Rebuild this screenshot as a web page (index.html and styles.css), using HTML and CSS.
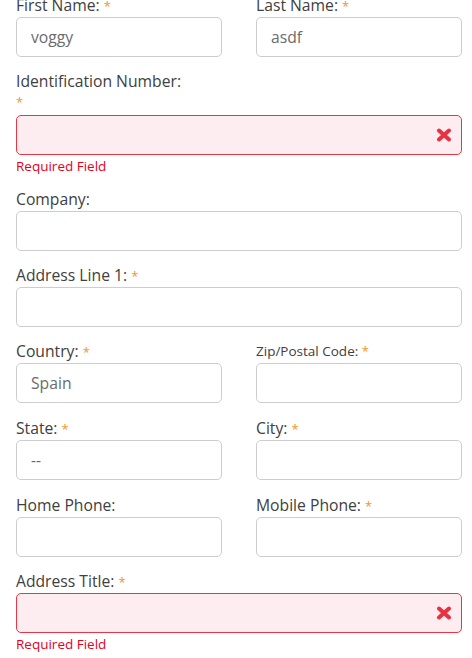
FILE: index.html
```html
<!DOCTYPE html>
<html>
<head>
<meta charset="utf-8">
<link rel="stylesheet" href="styles.css">
</head>
<body>
<form class="form">
  <div class="row">
    <div class="field">
      <label class="label">First Name: <span class="req">*</span></label>
      <input class="input" type="text" value="voggy">
    </div>
    <div class="field">
      <label class="label">Last Name: <span class="req">*</span></label>
      <input class="input" type="text" value="asdf">
    </div>
  </div>

  <div class="field">
    <label class="label">Identification Number:<span class="req star-line">*</span></label>
    <div class="input-wrap">
      <input class="input error" type="text" value="">
      <svg class="err-icon" viewBox="0 0 16 14" width="16" height="14"><path d="M3 2.5 L13 11.5 M13 2.5 L3 11.5" stroke="#e8323f" stroke-width="4" stroke-linecap="round"/></svg>
    </div>
    <div class="error-msg">Required Field</div>
  </div>

  <div class="field">
    <label class="label">Company:</label>
    <input class="input" type="text" value="">
  </div>

  <div class="field">
    <label class="label">Address Line 1: <span class="req">*</span></label>
    <input class="input" type="text" value="">
  </div>

  <div class="row">
    <div class="field">
      <label class="label">Country: <span class="req">*</span></label>
      <input class="input" type="text" value="Spain">
    </div>
    <div class="field">
      <label class="label label-small">Zip/Postal Code: <span class="req">*</span></label>
      <input class="input" type="text" value="">
    </div>
  </div>

  <div class="row">
    <div class="field">
      <label class="label">State: <span class="req">*</span></label>
      <input class="input" type="text" value="--">
    </div>
    <div class="field">
      <label class="label">City: <span class="req">*</span></label>
      <input class="input" type="text" value="">
    </div>
  </div>

  <div class="row">
    <div class="field">
      <label class="label">Home Phone:</label>
      <input class="input" type="text" value="">
    </div>
    <div class="field">
      <label class="label">Mobile Phone: <span class="req">*</span></label>
      <input class="input" type="text" value="">
    </div>
  </div>

  <div class="field">
    <label class="label">Address Title: <span class="req">*</span></label>
    <div class="input-wrap">
      <input class="input error" type="text" value="">
      <svg class="err-icon" viewBox="0 0 16 14" width="16" height="14"><path d="M3 2.5 L13 11.5 M13 2.5 L3 11.5" stroke="#e8323f" stroke-width="4" stroke-linecap="round"/></svg>
    </div>
    <div class="error-msg">Required Field</div>
  </div>
</form>
</body>
</html>
```

FILE: styles.css
```css
html, body {
  margin: 0;
  padding: 0;
  background: #ffffff;
}

body {
  font-family: "Open Sans", Roboto, "Liberation Sans", sans-serif;
  color: #404040;
  overflow: hidden;
}

.form {
  margin: -5px 0 0 0;
  padding: 0 10px 0 16px;
  display: flex;
  flex-direction: column;
  gap: 14px;
}

.row {
  display: grid;
  grid-template-columns: 1fr 1fr;
  column-gap: 34px;
}

.row + .row {
  margin-top: 1px;
}

.field {
  display: flex;
  flex-direction: column;
}

.label {
  display: block;
  height: 20px;
  font-size: 15.7px;
  line-height: 20px;
  margin-bottom: 2px;
  color: #404040;
  white-space: nowrap;
}

.label-small {
  font-size: 13.5px;
}

.req {
  color: #f7941d;
  font-size: 13px;
  line-height: 1;
}

.star-line {
  display: block;
  height: 22px;
  line-height: 22px;
}

.label:has(.star-line) {
  height: 42px;
}

.input-wrap {
  position: relative;
}

.input {
  box-sizing: border-box;
  display: block;
  width: 100%;
  height: 40px;
  margin: 0;
  border: 1px solid #cdcdcd;
  border-radius: 5px;
  padding: 0 14px;
  font-family: "Open Sans", Roboto, "Liberation Sans", sans-serif;
  font-size: 15.7px;
  color: #6b6b6b;
  background: #ffffff;
  outline: none;
}

.input.error {
  border-color: #ea3545;
  background: #fdedf0;
}

.err-icon {
  position: absolute;
  right: 10px;
  top: 13px;
}

.error-msg {
  color: #e6001e;
  font-size: 13.5px;
  line-height: 18px;
  margin-top: 2px;
}
```
